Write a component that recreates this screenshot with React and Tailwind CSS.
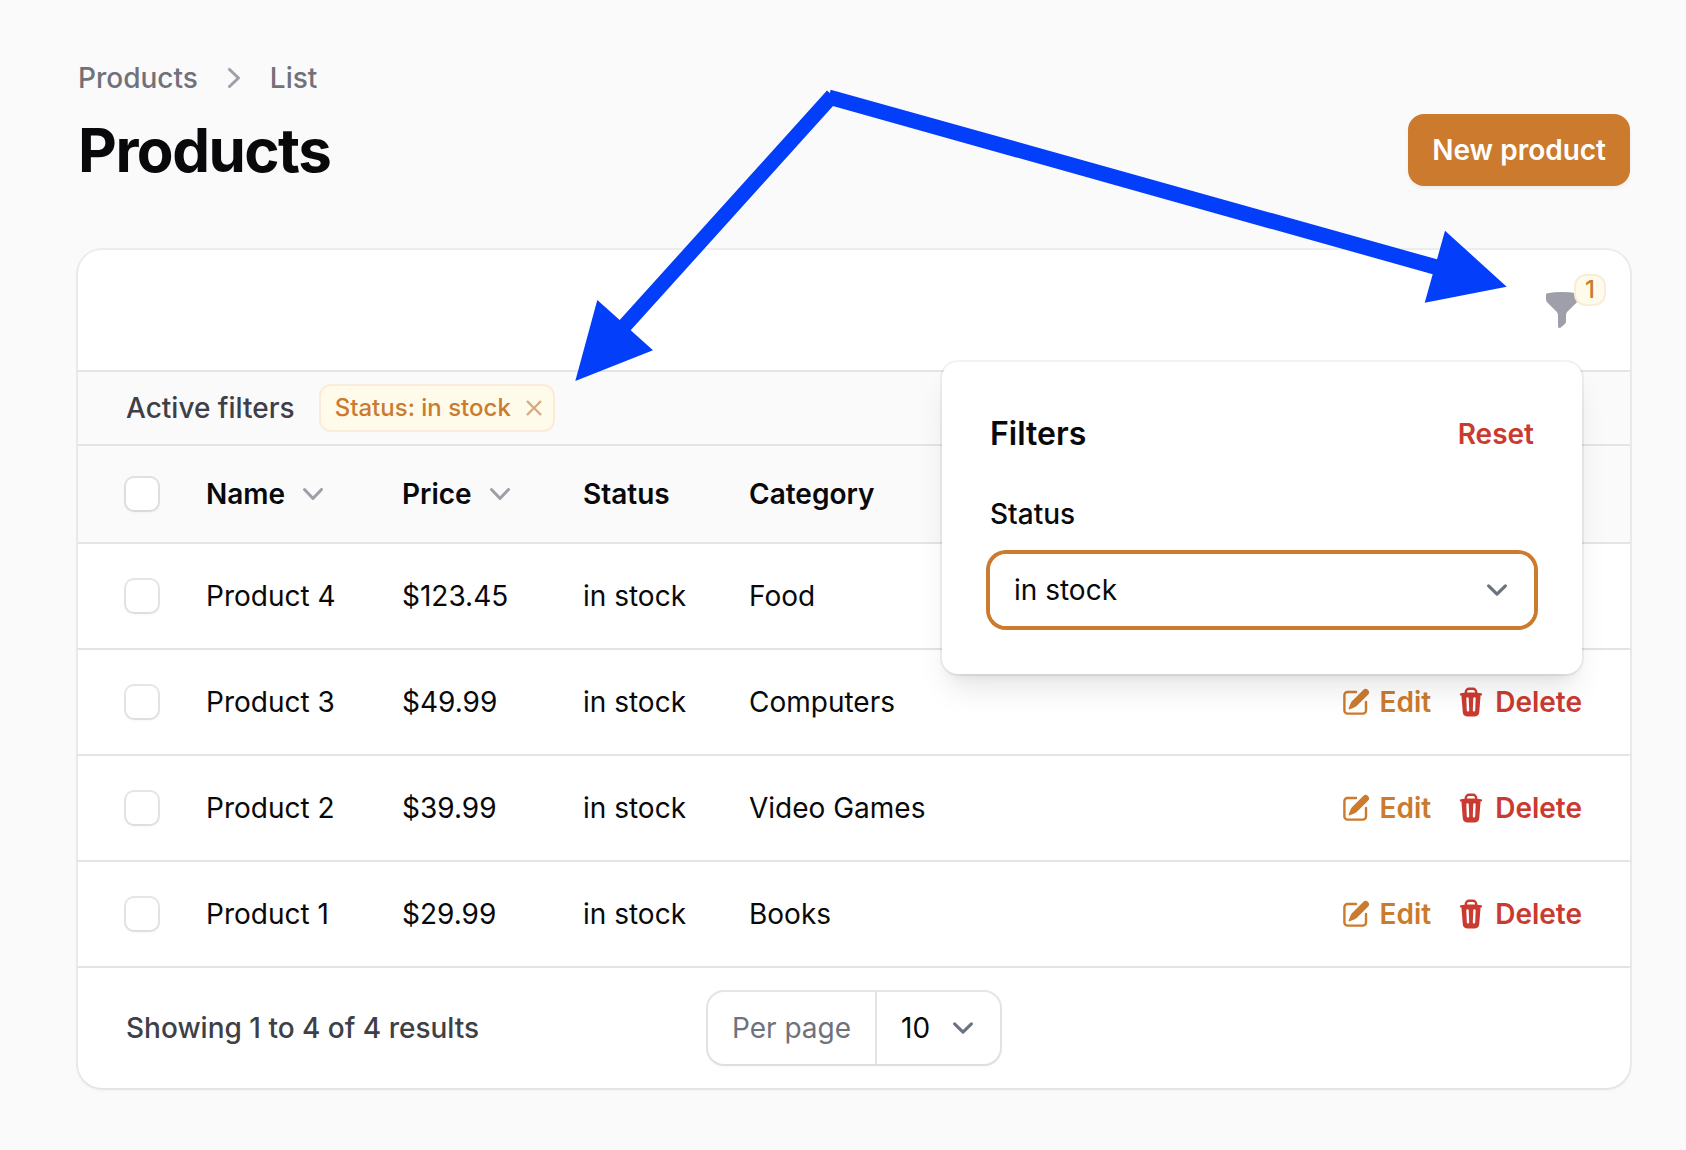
import React from "react";
import { HiMiniFunnel, HiMiniPencilSquare, HiMiniTrash, HiMiniXMark } from "react-icons/hi2";

const products = [
  { name: "Product 4", price: "$123.45", status: "in stock", category: "Food" },
  { name: "Product 3", price: "$49.99", status: "in stock", category: "Computers" },
  { name: "Product 2", price: "$39.99", status: "in stock", category: "Video Games" },
  { name: "Product 1", price: "$29.99", status: "in stock", category: "Books" },
];

function ChevronRight() {
  return (
    <svg viewBox="0 0 20 20" fill="currentColor" className="size-10 text-zinc-400" aria-hidden="true">
      <path
        fillRule="evenodd"
        clipRule="evenodd"
        d="M7.21 14.77a.75.75 0 0 1 .02-1.06L11.168 10 7.23 6.29a.75.75 0 1 1 1.04-1.08l4.5 4.25a.75.75 0 0 1 0 1.08l-4.5 4.25a.75.75 0 0 1-1.06-.02Z"
      />
    </svg>
  );
}

function ChevronDown() {
  return (
    <svg viewBox="0 0 20 20" fill="currentColor" className="size-10 text-zinc-400" aria-hidden="true">
      <path
        fillRule="evenodd"
        clipRule="evenodd"
        d="M5.23 7.21a.75.75 0 0 1 1.06.02L10 11.168l3.71-3.938a.75.75 0 1 1 1.08 1.04l-4.25 4.5a.75.75 0 0 1-1.08 0l-4.25-4.5a.75.75 0 0 1 .02-1.06Z"
      />
    </svg>
  );
}

function Breadcrumbs() {
  return (
    <nav aria-label="Breadcrumb" className="flex items-center gap-4 font-medium text-zinc-500">
      <a href="#products">Products</a>
      <ChevronRight />
      <a href="#list">List</a>
    </nav>
  );
}

function Checkbox({ label }) {
  return (
    <input
      type="checkbox"
      aria-label={label}
      className="block size-8 appearance-none rounded-lg bg-white shadow-[0_2px_4px_rgba(0,0,0,0.05)] ring-2 ring-zinc-950/10 checked:bg-[#cb7a2e]"
    />
  );
}

function SelectChevron() {
  return (
    <svg
      viewBox="0 0 20 20"
      fill="none"
      stroke="#6b7280"
      strokeWidth="1.5"
      strokeLinecap="round"
      strokeLinejoin="round"
      className="pointer-events-none absolute inset-y-0 right-4 my-auto size-[42px]"
      aria-hidden="true"
    >
      <path d="M6 8l4 4 4-4" />
    </svg>
  );
}

function SortHeader({ children }) {
  return (
    <button type="button" className="flex items-center gap-2 font-semibold">
      {children}
      <ChevronDown />
    </button>
  );
}

function FiltersPanel() {
  return (
    <section
      aria-label="Filters"
      className="absolute top-28 right-12 z-10 w-[640px] rounded-2xl bg-white p-12 shadow-[0_20px_30px_-6px_rgba(0,0,0,0.1),0_8px_12px_-8px_rgba(0,0,0,0.1)] ring-2 ring-zinc-950/5"
    >
      <div className="flex items-center justify-between">
        <h2 className="text-[32px] leading-12 font-semibold">Filters</h2>
        <button type="button" className="font-semibold text-[#ca3a31]">
          Reset
        </button>
      </div>
      <label htmlFor="status" className="mt-8 block leading-12 font-medium">
        Status
      </label>
      <div className="relative mt-4 rounded-2xl ring-4 ring-[#cb7a2e]">
        <select
          id="status"
          defaultValue="in stock"
          className="block h-18 w-full appearance-none rounded-2xl bg-white px-6 outline-none"
        >
          <option>in stock</option>
          <option>sold out</option>
          <option>coming soon</option>
        </select>
        <SelectChevron />
      </div>
    </section>
  );
}

function ProductsTable() {
  return (
    <table className="w-full table-fixed border-separate border-spacing-0 text-left">
      <colgroup>
        <col className="w-[104px]" />
        <col className="w-[196px]" />
        <col className="w-[181px]" />
        <col className="w-[166px]" />
        <col />
        <col className="w-[340px]" />
      </colgroup>
      <thead className="bg-zinc-50">
        <tr className="h-24">
          <th className="pl-12">
            <Checkbox label="Select all products" />
          </th>
          <th className="pl-6">
            <SortHeader>Name</SortHeader>
          </th>
          <th className="pl-6">
            <SortHeader>Price</SortHeader>
          </th>
          <th className="pl-6 font-semibold">Status</th>
          <th className="pl-6 font-semibold">Category</th>
          <th aria-label="Actions" />
        </tr>
      </thead>
      <tbody>
        {products.map((p) => (
          <tr key={p.name} className="h-[106px] *:border-t-2 *:border-zinc-200">
            <td className="pl-12">
              <Checkbox label={"Select " + p.name} />
            </td>
            <td className="pl-6">{p.name}</td>
            <td className="pl-6">{p.price}</td>
            <td className="pl-6">{p.status}</td>
            <td className="pl-6">{p.category}</td>
            <td className="pr-12">
              <div className="flex justify-end gap-6 font-semibold">
                <a href="#edit" className="flex items-center gap-2 text-[#cb7a2e]">
                  <HiMiniPencilSquare className="size-8" />
                  Edit
                </a>
                <button type="button" className="flex items-center gap-2 text-[#ca3a31]">
                  <HiMiniTrash className="size-8" />
                  Delete
                </button>
              </div>
            </td>
          </tr>
        ))}
      </tbody>
    </table>
  );
}

function Arrows() {
  return (
    <svg
      viewBox="575 89 932 293"
      className="pointer-events-none absolute top-[89px] left-[575px] z-20 h-[293px] w-[932px]"
      fill="#033ffa"
      aria-hidden="true"
    >
      <path d="M827 90.5 L838 100.5 L630.7 330.3 L653 350.3 L575.3 381 L597.3 300 L619.7 320 Z" />
      <path d="M830.7 89.7 L1437 259.3 L1445 230.7 L1506.7 286.7 L1424.7 302.7 L1432.7 274.2 L826.6 104.2 Z" />
    </svg>
  );
}

export default function App() {
  return (
    <div className="relative min-h-screen bg-zinc-50 pt-[58px] pr-14 pb-[60px] pl-[78px] font-['Inter',sans-serif] text-[28px] leading-10 text-zinc-950">
      <header>
        <Breadcrumbs />
        <div className="mt-4 flex items-center justify-between">
          <h1 className="text-6xl leading-18 font-bold tracking-tight">Products</h1>
          <button
            type="button"
            className="rounded-2xl bg-[#cb7a2e] px-6 py-4 font-semibold text-white shadow-[0_2px_4px_rgba(0,0,0,0.05)]"
          >
            New product
          </button>
        </div>
      </header>

      <main className="relative mt-16 rounded-3xl bg-white shadow-[0_2px_4px_rgba(0,0,0,0.05)] ring-2 ring-zinc-950/5">
        <div className="flex h-30 items-center justify-end px-12">
          <button type="button" aria-label="Filter" className="relative text-zinc-400">
            <HiMiniFunnel className="size-10" />
            <span className="absolute -top-4 -right-6 flex size-8 items-center justify-center rounded-xl border-2 border-[#faecd8] bg-amber-50 text-2xl font-medium text-[#cb7a2e]">
              1
            </span>
          </button>
        </div>

        <div className="flex h-[76px] items-center gap-6 border-y-2 border-zinc-200 bg-zinc-50 px-12">
          <span className="font-medium text-zinc-700">Active filters</span>
          <span className="flex h-12 items-center gap-2 rounded-xl border-2 border-[#faecd8] bg-amber-50 pr-1 pl-3.5 text-2xl font-medium text-[#cb7a2e]">
            Status: in stock
            <button type="button" aria-label="Remove filter" className="text-[#d6aa84]">
              <HiMiniXMark className="size-[30px]" />
            </button>
          </span>
        </div>

        <ProductsTable />

        <footer className="grid grid-cols-[1fr_auto_1fr] items-center border-t-2 border-zinc-200 px-12 py-6">
          <span className="font-medium text-zinc-700">Showing 1 to 4 of 4 results</span>
          <div className="flex rounded-2xl bg-white shadow-[0_2px_4px_rgba(0,0,0,0.05)] ring-2 ring-zinc-950/10">
            <label
              htmlFor="per-page"
              className="flex h-18 items-center border-r-2 border-zinc-200 px-6 text-zinc-500"
            >
              Per page
            </label>
            <div className="relative">
              <select
                id="per-page"
                defaultValue="10"
                className="block h-18 w-[123px] appearance-none rounded-r-2xl bg-transparent pl-6 outline-none"
              >
                <option>10</option>
                <option>25</option>
                <option>50</option>
              </select>
              <SelectChevron />
            </div>
          </div>
        </footer>

        <FiltersPanel />
      </main>

      <Arrows />
    </div>
  );
}
